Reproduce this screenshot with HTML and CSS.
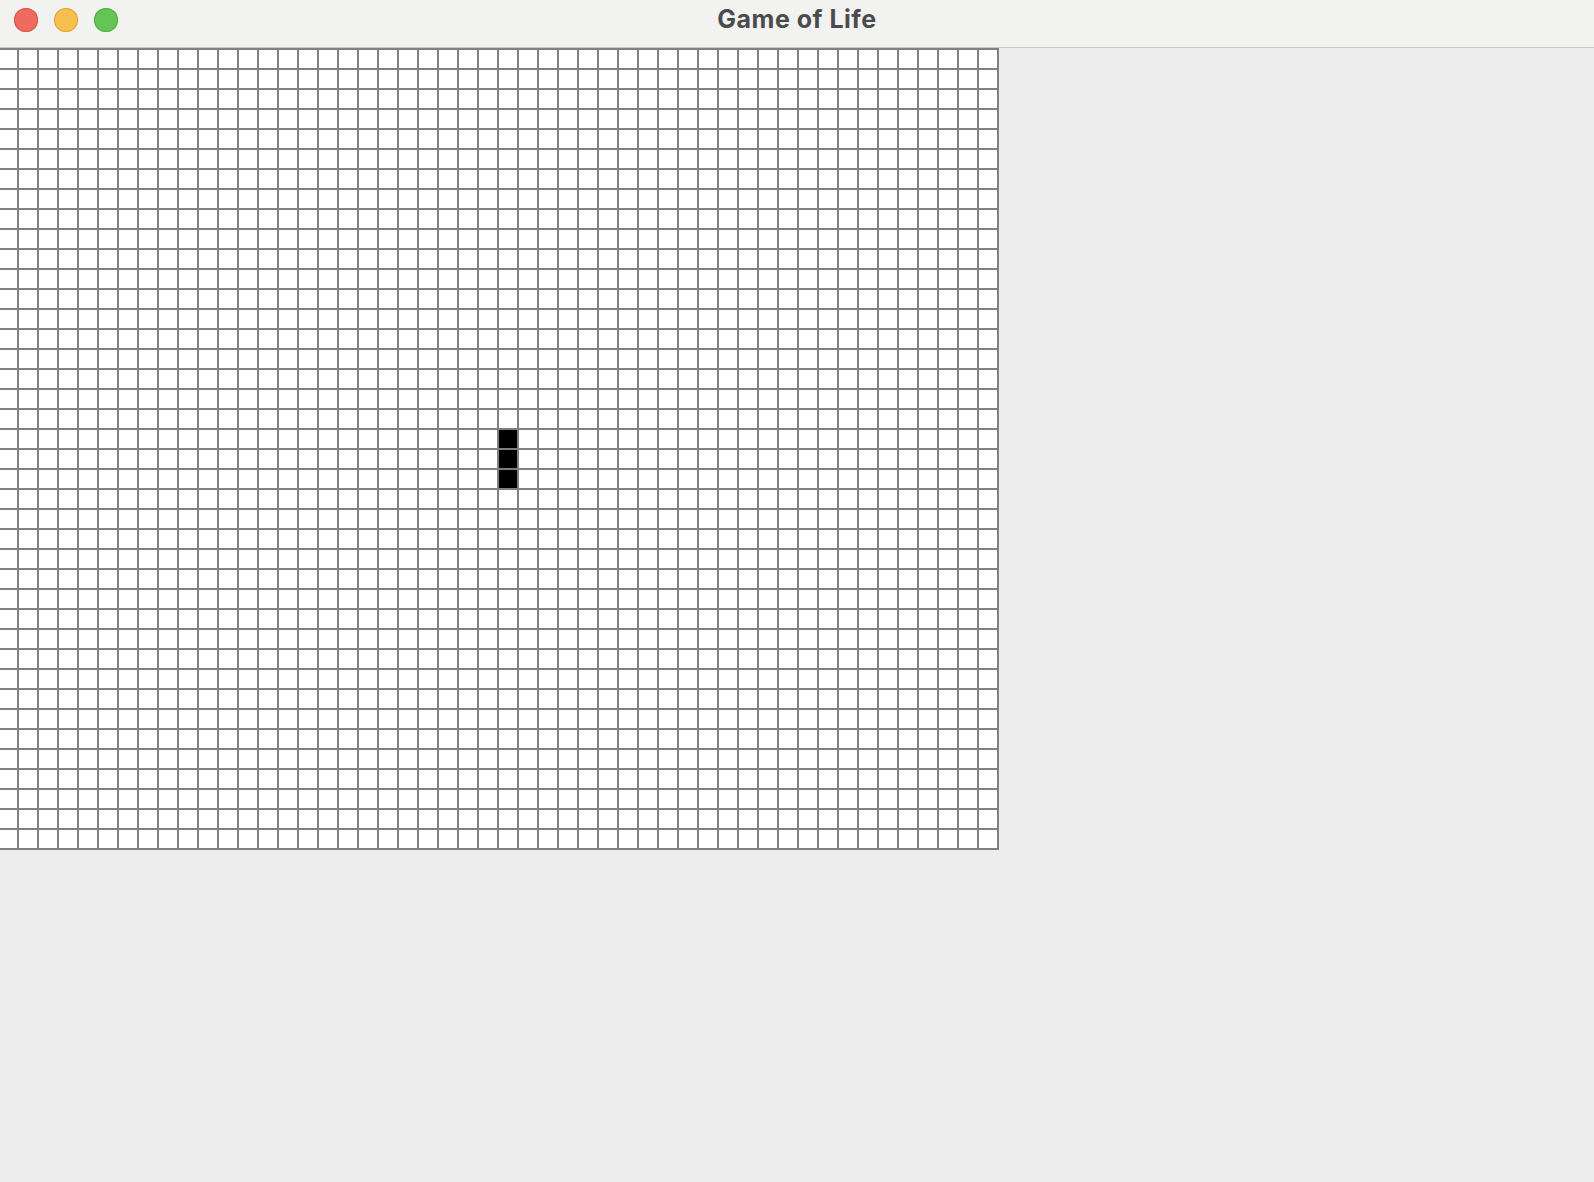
FILE: index.html
```html
<!DOCTYPE html>
<html lang="en">
<head>
<meta charset="utf-8">
<title>Game of Life</title>
<link rel="stylesheet" href="styles.css">
</head>
<body>
<div class="window">
  <header class="titlebar">
    <div class="lights">
      <span class="light red"></span>
      <span class="light yellow"></span>
      <span class="light green"></span>
    </div>
    <h1 class="title">Game of Life</h1>
  </header>
  <main class="content">
    <div class="board" id="board"></div>
  </main>
</div>
<script src="app.js"></script>
</body>
</html>
```
FILE: styles.css
```css
* { box-sizing: border-box; }
html, body {
  margin: 0;
  padding: 0;
  background: #ededed;
  font-family: Inter, "Open Sans", "Liberation Sans", sans-serif;
}
.window {
  width: 1594px;
  height: 1182px;
  overflow: hidden;
  background: #ededed;
}
.titlebar {
  position: relative;
  height: 48px;
  background: #f2f2f1;
  border-bottom: 1px solid #c9c9c9;
  display: flex;
  align-items: center;
  justify-content: center;
}
.lights {
  position: absolute;
  left: 14px;
  top: 8px;
  display: flex;
  gap: 16px;
}
.light {
  width: 24px;
  height: 24px;
  border-radius: 50%;
  display: block;
}
.red { background: #ef6b5f; box-shadow: inset 0 0 0 1px #d9564b; }
.yellow { background: #f6bf50; box-shadow: inset 0 0 0 1px #dea63a; }
.green { background: #62c554; box-shadow: inset 0 0 0 1px #4faf41; }
.title {
  margin: 0;
  font-size: 25px;
  font-weight: 700;
  color: #4b4b4b;
  letter-spacing: 0.5px;
  line-height: 1;
  position: relative;
  top: -4px;
}
.content {
  display: flex;
}
.board {
  margin-left: -3px;
  display: grid;
  grid-template-columns: repeat(50, 18px);
  grid-auto-rows: 18px;
  gap: 2px;
  padding: 2px;
  background: #808080;
}
.cell { background: #ffffff; }
.cell.alive { background: #000000; }
```
FILE: app.js
```js
(function () {
  var board = document.getElementById('board');
  var rows = 40, cols = 50;
  var alive = { '19,25': 1, '20,25': 1, '21,25': 1 };
  var frag = document.createDocumentFragment();
  for (var r = 0; r < rows; r++) {
    for (var c = 0; c < cols; c++) {
      var d = document.createElement('div');
      d.className = 'cell' + (alive[r + ',' + c] ? ' alive' : '');
      frag.appendChild(d);
    }
  }
  board.appendChild(frag);
})();
```
